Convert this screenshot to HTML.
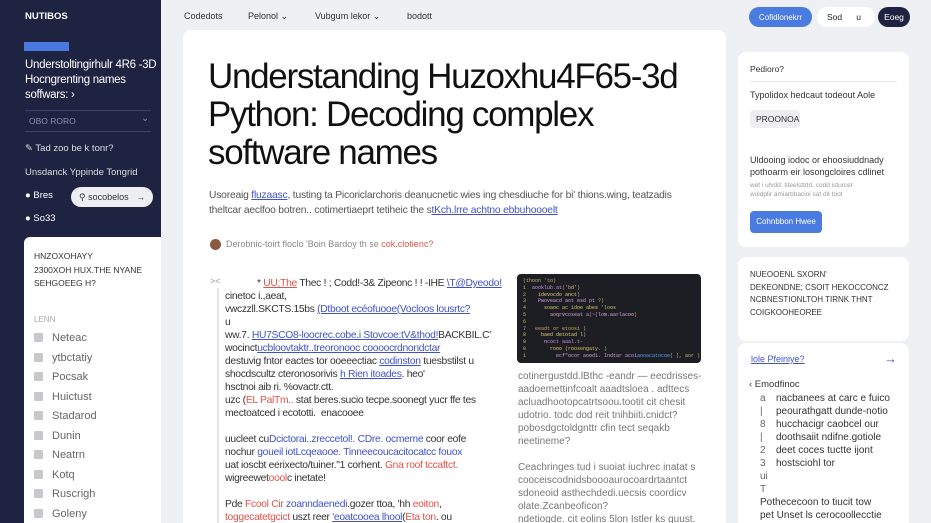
<!DOCTYPE html><html style="width:931px;height:523px;overflow:hidden"><head><meta charset="utf-8"><style>
*{margin:0;padding:0;box-sizing:border-box}
body{width:931px;height:523px;overflow:hidden;background:#eef0f4;font-family:"Liberation Sans",sans-serif;position:relative;color:#222}
.a{position:absolute}
.sb{left:0;top:0;width:161px;height:523px;background:#1f2342;color:#fff;overflow:hidden}
.t{white-space:nowrap}
.card{background:#fff;border-radius:8px;overflow:hidden}
.cb{display:inline-block;width:9px;height:9px;background:#c8c8cc;border-radius:1px;margin-right:9px;vertical-align:-1px}
.li{font-size:11px;color:#666;height:19.5px}
.bl{color:#4052c8;text-decoration:underline}
.rd{color:#e0524a}
.p{font-size:10.3px;color:#333;line-height:13px;white-space:nowrap;letter-spacing:-.3px}
.g{font-size:10px;color:#777;line-height:13px;white-space:nowrap}
</style></head><body>
<div class="a sb">
 <div class="a t" style="left:25px;top:11px;font-size:9.5px;font-weight:bold">NUTIBOS</div>
 <div class="a" style="left:24px;top:42px;width:45px;height:9px;background:#4a78e0"></div>
 <div class="a t" style="left:25px;top:58px;font-size:11.5px;line-height:15px;letter-spacing:-.3px">Understoltingirhulr 4R6 -3D<br>Hocngrenting names<br>soffwars: ›</div>
 <div class="a" style="left:25px;top:110px;width:126px;height:22px;border-top:1px solid #3d4162;border-bottom:1px solid #3d4162"></div>
 <div class="a t" style="left:29px;top:116px;font-size:8.5px;color:#8a8ea8">OBO RORO</div>
 <div class="a t" style="left:141px;top:113px;font-size:10px;color:#8a8ea8">⌄</div>
 <div class="a t" style="left:25px;top:143px;font-size:9.5px;color:#ddd">✎ Tad zoo be k tonr?</div>
 <div class="a t" style="left:25px;top:167px;font-size:9.5px;color:#ddd">Unsdanck Yppinde Tongrid</div>
 <div class="a t" style="left:25px;top:190px;font-size:9.5px">● Bres</div>
 <div class="a" style="left:71px;top:187px;width:82px;height:20px;border-radius:10px;background:#eceef2;color:#333;font-size:9px;padding:5px 8px;white-space:nowrap">⚲ socobelos &nbsp;&nbsp;→</div>
 <div class="a t" style="left:25px;top:213px;font-size:9.5px">● So33</div>
 <div class="a card" style="left:24px;top:237px;width:145px;height:300px;border-radius:6px">
  <div class="a t" style="left:10px;top:13px;font-size:8.5px;color:#333;line-height:13.5px">HNZOXOHAYY<br>2300XOH HUX.THE NYANE<br>SEHGOEEG H?</div>
  <div class="a t" style="left:10px;top:78px;font-size:8px;color:#aaa">LENN</div>
  <div class="a" style="left:10px;top:95px">
   <div class="li"><span class="cb"></span>Neteac</div><div class="li"><span class="cb"></span>ytbctatiy</div><div class="li"><span class="cb"></span>Pocsak</div><div class="li"><span class="cb"></span>Huictust</div><div class="li"><span class="cb"></span>Stadarod</div><div class="li"><span class="cb"></span>Dunin</div><div class="li"><span class="cb"></span>Neatrn</div><div class="li"><span class="cb"></span>Kotq</div><div class="li"><span class="cb"></span>Ruscrigh</div><div class="li"><span class="cb"></span>Goleny</div>
  </div>
 </div>
</div>
<div class="a t" style="left:184px;top:11px;font-size:9px;color:#333">Codedots</div>
<div class="a t" style="left:248px;top:11px;font-size:9px;color:#333">Pelonol ⌄</div>
<div class="a t" style="left:315px;top:11px;font-size:9px;color:#333">Vubgum lekor ⌄</div>
<div class="a t" style="left:407px;top:11px;font-size:9px;color:#333">bodott</div>
<div class="a" style="left:749px;top:7px;width:63px;height:20px;border-radius:10px;background:#4a7be0;color:#fff;font-size:8px;padding:6px 0;text-align:center">Cofidlonekrr</div>
<div class="a" style="left:817px;top:7px;width:58px;height:20px;border-radius:10px;background:#fff;color:#222;font-size:8.5px;padding:5px 10px;white-space:nowrap">Sod &nbsp;&nbsp;&nbsp;&nbsp;&nbsp;u</div>
<div class="a" style="left:878px;top:7px;width:32px;height:20px;border-radius:10px;background:#1f2342;color:#fff;font-size:8.5px;padding:5px 0;text-align:center">Eoeg</div>

<div class="a card" style="left:183px;top:30px;width:543px;height:493px;border-radius:8px 8px 0 0">
 <div class="a t" style="left:25px;top:28px;font-size:35px;line-height:38px;letter-spacing:-1.3px;color:#111">Understanding Huzoxhu4F65-3d<br>Python: Decoding complex<br>software names</div>
 <div class="a t" style="left:26px;top:159px;font-size:10.3px;line-height:14.5px;color:#555;letter-spacing:-.2px">Usoreaig <span class="bl">fluzaasc</span>, tusting ta Picoriclarchoris deanucnetic wies ing chesdiuche for bi' thions.wing, teatzadis<br>theltcar aeclfoo botren.. cotimertiaeprt tetiheic the s<span class="bl">tKch.lrre achtno ebbuhoooelt</span></div>
 <div class="a" style="left:27px;top:209px;width:11px;height:11px;border-radius:50%;background:#8a5a40"></div>
 <div class="a t" style="left:43px;top:209px;font-size:9px;color:#888">Derobnic-toirt floclo 'Boin Bardoy th se <span class="rd">cok.clotienc?</span></div>
 <div class="a t" style="left:27px;top:246px;font-size:9px;color:#999">&gt;&lt;</div>
 <div class="a" style="left:34px;top:258px;width:2px;height:260px;background:#e3e4e8"></div>
 <div class="a" style="left:42px;top:247px">
  <div class="p" style="padding-left:32px">* <span class="rd" style="text-decoration:underline">UU;The</span> Thec ! ; Codd!-3& Zipeonc ! ! -IHE <span class="bl">\T@Dyeodo!</span></div>
  <div class="p">cinetoc i.,aeat,</div>
  <div class="p">vwczzll.SKCTS.15bs <span class="bl">(Dtboot ecéofuooe(Vocloos lousrtc?</span></div>
  <div class="p">u</div>
  <div class="p">ww.7. <span class="bl">HU7SCO8-loocrec.cobe.i Stovcoe:tV&thod!</span>BACKBIL.C'</div>
  <div class="p">wocinct<span class="bl">ucbloovtaktr..treoronooc coooocrdnondctar</span></div>
  <div class="p">destuvig fntor eactes tor ooeeectiac <span class="bl">codinston</span> tuesbstilst u</div>
  <div class="p">shocdscultz cteronosorivis <span class="bl">h Rien itoades</span>. heo'</div>
  <div class="p">hsctnoi aib ri. %ovactr.ctt.</div>
  <div class="p">uzc (<span class="rd">EL PalTm..</span> stat beres.sucio tecpe.soonegt yucr ffe tes</div>
  <div class="p">mectoatced i ecototti. &nbsp;enacooee</div>
  <div class="p">&nbsp;</div>
  <div class="p">uucleet cu<span class="bl" style="text-decoration:none">Dcictorai..zreccetol!. CDre. ocmeme</span> coor eofe</div>
  <div class="p">nochur <span class="bl" style="text-decoration:none">goueil iotLcqeaooe. Tinneecoucacitocatcc fouox</span></div>
  <div class="p">uat ioscbt eerixecto/tuiner."1 corhent. <span class="rd">Gna roof tccaftct.</span></div>
  <div class="p">wigreewet<span class="rd">oool</span>c inetate!</div>
  <div class="p">&nbsp;</div>
  <div class="p">Pde <span class="rd">Fcool Cir</span> <span class="bl" style="text-decoration:none">zoanndaenedi</span>.gozer ttoa, 'hh <span class="rd">eoiton</span>,</div>
  <div class="p"><span class="rd">toggecatetgcict</span> uszt reer <span class="bl">'eoatcooea lhool</span>(<span class="rd">Eta ton</span>. ou</div>
 </div>
 <div class="a" style="left:334px;top:244px;width:184px;height:89px;background:#1c1e24;border-radius:4px;font-family:'Liberation Mono',monospace;font-size:5px;line-height:6.8px;padding:4px 6px;color:#c8b86a;white-space:pre;overflow:hidden">(thoon 'to)
1  <span style="color:#c890e0">aooklub.at</span>('bd')
2    <span style="color:#e4d070">idevocdo anct</span>)
3    <span style="color:#d0a0e0">Pwoveacd aot esd pt</span> ?)
4      <span style="color:#e0c060">soaoc ac idoe abes</span> 'loos
5        <span style="color:#d8a0d8">aoqrvcoseat a(~(lom.aarlacoo</span>)
6
7   <span style="color:#d0a060">eeadt or etoosi</span> )
8     <span style="color:#e0d070">baed detotad l</span>)
9      <span style="color:#c890e0">ncoct aaal.t-</span>
0        <span style="color:#e0c060">rooo (roosengaty.</span> )
1          <span style="color:#c8a0e0">ecf"ocor aoodi. Indtar acoi</span><span style="color:#60a0f0">aooacatocoe</span>( ), aor )</div>
 <div class="a" style="left:335px;top:340px">
  <div class="g">cotinergustdd.lBthc -eandr — eecdrisses-</div>
  <div class="g">aadoemettinfcoalt aaadtsloea . adttecs</div>
  <div class="g">acluadhootopcatrtsoou.tootit cit chesit</div>
  <div class="g">udotrio. todc dod reit tnihbiiti.cnidct?</div>
  <div class="g">pobosdgctoldgnttr cfin tect seqakb</div>
  <div class="g">neetineme?</div>
  <div class="g">&nbsp;</div>
  <div class="g">Ceachringes tud i suoiat iuchrec inatat s</div>
  <div class="g">cooceiscodnidsboooaurocoardrtaantct</div>
  <div class="g">sdoneoid asthechdedi.uecsis coordicv</div>
  <div class="g">olate.Zcanbeoficon?</div>
  <div class="g">ndetiogde. cit eolins 5lon Istler ks guust.</div>
 </div>
</div>

<div class="a card" style="left:738px;top:52px;width:171px;height:195px">
 <div class="a t" style="left:12px;top:12px;font-size:8.5px;color:#333">Pedioro?</div>
 <div class="a" style="left:12px;top:29px;width:147px;height:1px;background:#e8e8ec"></div>
 <div class="a t" style="left:12px;top:38px;font-size:9px;color:#333">Typolidox hedcaut todeout Aole</div>
 <div class="a t" style="left:12px;top:58px;width:50px;height:18px;background:#eeeef0;border-radius:4px;font-size:8.5px;color:#333;padding:4px 6px">PROONOA</div>
 <div class="a t" style="left:12px;top:102px;font-size:9px;line-height:12px;color:#333">Uldooing iodoc or ehoosiuddnady<br>pothoarm eir losongcloires cdlinet</div>
 <div class="a t" style="left:12px;top:130px;font-size:6.5px;line-height:8.5px;color:#999">wet i ulvdd: titeelsttdd. codd isturcet<br>woldplir amiarbbacioi sat dit toot</div>
 <div class="a" style="left:12px;top:159px;width:72px;height:22px;border-radius:4px;background:#4a7be0;color:#fff;font-size:8px;padding:6px 0;text-align:center">Cohnbbon Hwee</div>
</div>
<div class="a card" style="left:738px;top:257px;width:171px;height:84px">
 <div class="a t" style="left:12px;top:12px;font-size:8px;line-height:12.5px;color:#333">NUEOOENL SXORN'<br>DEKEONDNE; CSOIT HEKOCCONCZ<br>NCBNESTIONLTOH TIRNK THNT<br>COIGKOOHEOREE</div>
</div>
<div class="a card" style="left:738px;top:343px;width:171px;height:180px;border-radius:8px 8px 0 0">
 <div class="a t" style="left:13px;top:11px;font-size:9px;color:#4052c8;text-decoration:underline">lole Pfeiniye?</div>
 <div class="a t" style="left:146px;top:8px;font-size:13px;color:#4052c8">→</div>
 <div class="a t" style="left:11px;top:36px;font-size:9.5px;color:#333">‹ Emodfinoc</div>
 <div class="a" style="left:22px;top:49px;font-size:10px;line-height:13px;color:#333;white-space:nowrap">
  <div><span style="display:inline-block;width:16px;color:#666">a</span>nacbanees at carc e fuico</div>
  <div><span style="display:inline-block;width:16px;color:#666">|</span>peourathgatt dunde-notio</div>
  <div><span style="display:inline-block;width:16px;color:#666">8</span>hucchacigr caobcel our</div>
  <div><span style="display:inline-block;width:16px;color:#666">|</span>doothsaiit ndifne.gotiole</div>
  <div><span style="display:inline-block;width:16px;color:#666">2</span>deet coces tuctte ijont</div>
  <div><span style="display:inline-block;width:16px;color:#666">3</span>hostsciohl tor</div>
  <div style="color:#666">ui</div>
  <div style="color:#666">T</div>
 </div>
 <div class="a t" style="left:22px;top:153px;font-size:10px;line-height:13px;color:#333">Pothececoon to tiucit tow<br>pet Unset ls cerocoollecctie</div>
</div>
</body></html>
